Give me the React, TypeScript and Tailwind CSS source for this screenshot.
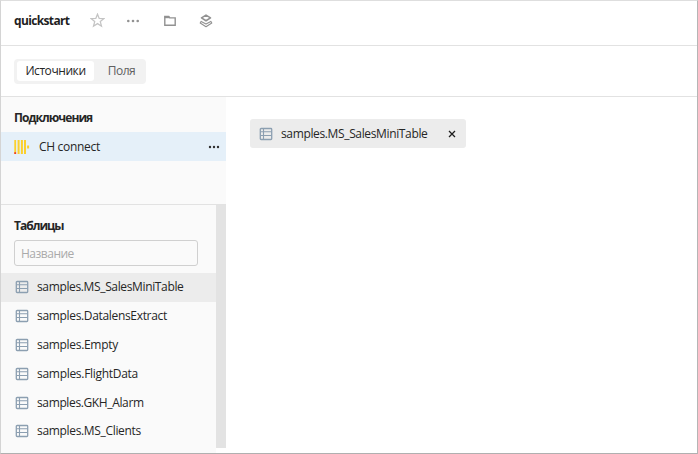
import React from "react";

const tables = [
  { name: "samples.MS_SalesMiniTable", track: "tracking-[-0.36px]" },
  { name: "samples.DatalensExtract", track: "tracking-[-0.33px]" },
  { name: "samples.Empty", track: "tracking-[-0.31px]" },
  { name: "samples.FlightData", track: "tracking-[-0.29px]" },
  { name: "samples.GKH_Alarm", track: "tracking-[-0.37px]" },
  { name: "samples.MS_Clients", track: "tracking-[-0.33px]" },
];

function TableIcon() {
  return (
    <svg width="14" height="14" viewBox="0 0 14 14" fill="none" stroke="#8c9fb1" className="shrink-0">
      <rect x="1.3" y="1.5" width="11.4" height="11" rx="0.8" strokeWidth="1.3" />
      <path d="M4.5 1.5v11M1.5 4.7h11M1.5 8.5h11" strokeWidth="1.1" />
    </svg>
  );
}

function Dots({ color, r, gap }: { color: string; r: number; gap: number }) {
  return (
    <svg width="14" height="4" viewBox="0 0 14 4" fill={color} className="shrink-0">
      <circle cx={7 - gap} cy="2" r={r} />
      <circle cx="7" cy="2" r={r} />
      <circle cx={7 + gap} cy="2" r={r} />
    </svg>
  );
}

function ClickHouseIcon() {
  return (
    <svg width="16" height="14" viewBox="0 0 16 14" className="shrink-0">
      <path d="M0.3 0h1.8v14H0.3zM3.6 0h2v14h-2zM6.9 0h2v14h-2zM10 0h2v14h-2zM13.1 5.4h2v3.2h-2z" fill="#fbd02e" />
      <path d="M0.3 12.2h1.8V14H0.3z" fill="#f03a24" />
    </svg>
  );
}

export default function App() {
  return (
    <div className="flex h-[454px] w-[698px] flex-col overflow-hidden border border-t-[#dedede] border-r-[#b5b5b5] border-b-[#b0b0b0] border-l-[#d4d4d4] bg-white font-['Open_Sans','Noto_Sans',sans-serif] text-[12px] leading-4 text-[#262626]">
      <header className="flex h-[45px] shrink-0 items-center border-b border-[#e2e2e2] pb-[5px] pl-[13px]">
        <h1 className="w-[76px] text-[12px] font-bold tracking-[-0.65px] text-[#1f1f1f]">quickstart</h1>
        <svg width="15" height="15" viewBox="0 0 14 14" fill="none" stroke="#c4c4c4" strokeWidth="1.2" className="shrink-0">
          <path d="M7 1.1l1.6 4 4.3.2-3.3 2.7 1.1 4.3L7 9.9l-3.7 2.4L4.4 8 1.1 5.3l4.3-.2z" />
        </svg>
        <div className="ml-[21px] flex"><Dots color="#929292" r={1.3} gap={4.7} /></div>
        <svg width="12" height="12" viewBox="0 0 12 12" className="ml-[24px] shrink-0" fill="none" stroke="#929292" strokeWidth="1.4">
          <path d="M.8 10.3V1.5h4l1 1.4h5.4v7.4z" />
          <path d="M.8 1.5h4l.8 1.5H.8z" fill="#929292" strokeWidth=".4" />
        </svg>
        <svg width="14" height="14" viewBox="0 0 14 14" className="ml-[23px] shrink-0" fill="none" stroke="#929292" strokeWidth="1.6" strokeLinejoin="round" strokeLinecap="round">
          <path d="M7 1.1l4.5 2.8L7 6.7 2.5 3.9z" />
          <path d="M2.2 7.4L1.2 9 7 12.7 12.8 9l-1-1.6L7 10 2.2 7.4z" strokeWidth="1.1" />
        </svg>
      </header>

      <div className="flex h-[51px] shrink-0 items-center border-b border-[#e2e2e2] pl-[13px]">
        <div className="flex h-[25px] w-[132px] items-center rounded bg-[#f2f2f2] px-[3px]">
          <button className="h-[20px] w-[77px] whitespace-nowrap rounded-[3px] bg-white text-center leading-[20px] tracking-[-0.43px]">Источники</button>
          <button className="ml-[6px] flex-1 text-center leading-[20px] tracking-[-0.5px] text-[#606060]">Поля</button>
        </div>
      </div>

      <div className="flex min-h-0 flex-1">
        <aside className="flex w-[225px] shrink-0 flex-col bg-[#fafafa]">
          <section className="h-[108px] shrink-0 border-b border-[#e2e2e2] pt-[13px]">
            <h2 className="pl-[13px] font-bold tracking-[-0.95px]">Подключения</h2>
            <div className="mt-[6px] flex h-[29px] items-center bg-[#e5f0f9] pr-[5px] pl-[13px]">
              <ClickHouseIcon />
              <span className="ml-[9px] flex-1 tracking-[-0.3px]">CH connect</span>
              <Dots color="#303030" r={1.2} gap={4} />
            </div>
          </section>
          <section className="flex min-h-0 flex-1">
            <div className="flex-1 pt-[13px]">
              <h2 className="pl-[13px] font-bold tracking-[-1px]">Таблицы</h2>
              <input
                placeholder="Название"
                className="mt-[6px] ml-[13px] block h-[26px] w-[184px] rounded-[3px] border border-[#d0d0d0] bg-[#fafafa] px-[6px] tracking-[-0.5px] placeholder:text-[#aaaaaa]"
              />
              <ul className="mt-[7px]">
                {tables.map((t, i) => (
                  <li key={t.name} className={`flex h-[28.8px] items-center pl-[14px] ${i === 0 ? "bg-[#ececec]" : ""}`}>
                    <TableIcon />
                    <span className={`ml-[8px] whitespace-nowrap ${t.track}`}>{t.name}</span>
                  </li>
                ))}
              </ul>
            </div>
            <div className="flex w-[10px] flex-col bg-white"><div className="h-[243px] bg-[#e3e3e3]" /></div>
          </section>
        </aside>
        <main className="flex-1 pt-[22px] pl-[24px]">
          <div className="flex h-[29px] w-[216px] items-center rounded-[3px] bg-[#ececec] pl-[9px]">
            <TableIcon />
            <span className="ml-[8px] whitespace-nowrap tracking-[-0.36px]">samples.MS_SalesMiniTable</span>
            <svg width="8" height="8" viewBox="0 0 8 8" className="mr-[10px] ml-auto shrink-0" stroke="#1f1f1f" strokeWidth="1.3">
              <path d="M1 1l6 6M7 1L1 7" />
            </svg>
          </div>
        </main>
      </div>
    </div>
  );
}
